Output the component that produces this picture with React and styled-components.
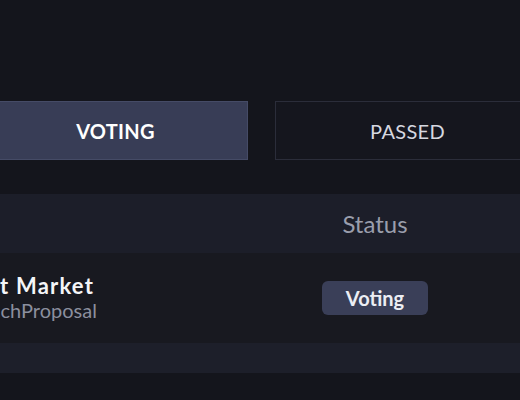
import React, { useState } from 'react';
import styled, { createGlobalStyle } from 'styled-components';

const GlobalStyle = createGlobalStyle`
  html, body {
    margin: 0;
    padding: 0;
    background: #14151c;
    overflow: hidden;
  }
  body {
    font-family: Lato, "Noto Sans", sans-serif;
    color: #ffffff;
  }
`;

const Page = styled.div`
  width: 557px;
  margin-left: -17px;
  padding-top: 101px;
`;

const Tabs = styled.div`
  display: grid;
  grid-template-columns: 1fr 1fr;
  gap: 27px;
`;

const Tab = styled.button`
  height: 59px;
  font-family: inherit;
  font-size: 20px;
  letter-spacing: 0.3px;
  font-weight: ${p => (p.active ? 700 : 400)};
  color: ${p => (p.active ? '#ffffff' : '#d6d8e0')};
  background: ${p => (p.active ? '#383d56' : '#15161e')};
  border: 1px solid ${p => (p.active ? '#454b66' : '#2b2d3a')};
  cursor: pointer;
`;

const Table = styled.div`
  margin-top: 34px;
  width: 600px;
`;

const Row = styled.div`
  display: grid;
  grid-template-columns: 302px 180px 1fr;
  align-items: center;
  height: ${p => p.h}px;
  background: ${p => p.bg};
`;

const HeadCell = styled.div`
  font-size: 24px;
  color: #9a9eac;
  text-align: center;
`;

const NameCell = styled.div`
  margin-left: -9px;
  display: flex;
  flex-direction: column;
`;

const Title = styled.span`
  font-size: 22px;
  font-weight: 700;
  letter-spacing: 1.2px;
  line-height: 24px;
  color: #f4f5f8;
  white-space: nowrap;
`;

const Sub = styled.span`
  margin-left: -16px;
  font-size: 20px;
  line-height: 24px;
  color: #8b8f9e;
  white-space: nowrap;
`;

const StatusCell = styled.div`
  display: flex;
  justify-content: center;
`;

const Badge = styled.span`
  display: inline-flex;
  align-items: center;
  justify-content: center;
  width: 106px;
  height: 34px;
  border-radius: 6px;
  background: #3a3f58;
  color: #eceef4;
  font-size: 20px;
  font-weight: 700;
`;

export default function App() {
  const [tab, setTab] = useState('voting');

  return (
    <>
      <GlobalStyle />
      <Page>
        <Tabs>
          <Tab active={tab === 'voting'} onClick={() => setTab('voting')}>VOTING</Tab>
          <Tab active={tab === 'passed'} onClick={() => setTab('passed')}>PASSED</Tab>
        </Tabs>
        <Table>
          <Row h={59} bg="#1c1e29">
            <div />
            <HeadCell>Status</HeadCell>
            <div />
          </Row>
          <Row h={90} bg="#181920">
            <NameCell>
              <Title>Set Market</Title>
              <Sub>LaunchProposal</Sub>
            </NameCell>
            <StatusCell>
              <Badge>Voting</Badge>
            </StatusCell>
            <div />
          </Row>
          <Row h={30} bg="#1d1f2a" />
        </Table>
      </Page>
    </>
  );
}
